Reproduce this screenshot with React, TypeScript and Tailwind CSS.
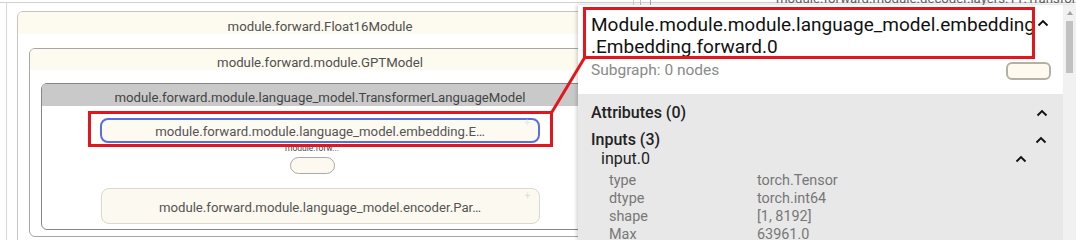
import React from "react";

function Chevron({ className = "" }: { className?: string }) {
  return (
    <svg width="12" height="8" viewBox="0 0 12 8" className={className}>
      <polyline points="1.5,6.5 6,2 10.5,6.5" fill="none" stroke="#111" strokeWidth="1.9" />
    </svg>
  );
}

function Row({ label, value }: { label: string; value: string }) {
  return (
    <div className="flex h-[18px] items-center pl-[18px] text-[14.4px] text-[#777]">
      <span className="w-[148px]">{label}</span>
      <span>{value}</span>
    </div>
  );
}

export default function App() {
  return (
    <div className="relative w-[1076px] h-[240px] overflow-hidden bg-white font-['Roboto',sans-serif]">
      {/* graph canvas */}
      <div className="pt-[2px]">
        <div className="h-px bg-[#d2d2d2]" />
        <div className="ml-[6px] border-l border-[#d8d8d8] pl-[10px] pt-[8px] h-[300px]">
          {/* Float16Module */}
          <div className="w-[606px] rounded-[6px] border border-[#c4c4c4] px-[11px] pb-[10px]">
            <div className="-mx-[11px] h-[22px] rounded-t-[5px] bg-[#fdfaf0] text-center text-[13.2px] leading-[29px] text-[#505050]">
              module.forward.Float16Module
            </div>
            {/* GPTModel */}
            <div className="mt-[14px] w-[582px] rounded-[6px] border border-[#a6a6a6] px-[11px] pb-[6px]">
              <div className="-mx-[11px] h-[21px] rounded-t-[5px] bg-[#fdfaf0] text-center text-[13.2px] leading-[27px] text-[#505050]">
                module.forward.module.GPTModel
              </div>
              {/* TransformerLanguageModel */}
              <div className="mt-[13px] w-[558px] rounded-[6px] border border-[#858585]">
                <div className="h-[22px] rounded-t-[5px] bg-[#c9c9c9] text-center text-[13.2px] leading-[27px] text-[#454545]">
                  module.forward.module.language_model.TransformerLanguageModel
                </div>
                <div className="flex flex-col items-center pt-[12px] pb-[5px]">
                  <div className="relative w-[440px] h-[25px] rounded-[8px] border-2 border-[#5b6fdc] bg-[#fdfaf2] text-center text-[13.2px] leading-[23px] text-[#555]">
                    module.forward.module.language_model.embedding.E…
                    <span className="absolute right-[8px] top-[-2px] text-[10px] leading-[10px] text-[#e6e6f4]">+</span>
                  </div>
                  <div className="mt-[1px] -ml-[16px] text-[8.5px] leading-[9px] text-[#444]">module.forw...</div>
                  <div className="mt-[4px] -ml-[16px] w-[45px] h-[17px] rounded-full border border-[#a9a9a9] bg-[#fdf9f0]" />
                  <div className="relative mt-[14px] w-[439px] h-[36px] rounded-[8px] border border-[#dcd8cc] bg-[#fcf9f0] text-center text-[13.2px] leading-[37px] text-[#555]">
                    module.forward.module.language_model.encoder.Par…
                    <span className="absolute right-[8px] top-[2px] text-[10px] leading-[10px] text-[#e2ded4]">+</span>
                  </div>
                </div>
              </div>
            </div>
          </div>
        </div>
        {/* neighbouring nodes peeking above the panel */}
        <div className="absolute left-[633px] top-0 h-[6px] border-l border-[#cfcfcf]" />
        <div className="absolute left-[640px] top-0 h-[6px] border-l border-[#bdbdbd]" />
        <div className="absolute left-[650px] top-0 h-[6px] border-l border-[#a8a8a8]" />
        <div className="absolute left-[776px] top-[-8px] whitespace-nowrap text-[13.2px] leading-[13px] text-[#606060]">
          module.forward.module.decoder.layers.11.Transformer
        </div>
      </div>

      {/* side panel */}
      <div className="absolute left-[578px] top-[5px] right-0 bottom-0 flex shadow-[-1px_0_4px_rgba(0,0,0,0.22)]">
        <div className="flex flex-1 flex-col overflow-hidden bg-white">
          <div className="h-[89px] shrink-0 pl-[13px] pr-[12px] pt-[9px]">
            <div className="flex items-start justify-between">
              <div className="text-[19px] leading-[22px] text-[#111]">
                <div>Module.module.module.language_model.embedding</div>
                <div>.Embedding.forward.0</div>
              </div>
              <Chevron className="mt-[5px] mr-[2px]" />
            </div>
            <div className="mt-[3px] flex h-[20px] items-center justify-between">
              <span className="text-[15.5px] text-[#8a8a8a]">Subgraph: 0 nodes</span>
              <div className="w-[45px] h-[18px] rounded-[6px] border-2 border-[#b4b0a4] bg-[#fffaf0]" />
            </div>
          </div>
          <div className="flex-1 bg-[#e8e8e8] pl-[13px] pr-[13px] pt-[9px]">
            <div className="flex h-[20px] items-center justify-between">
              <span className="text-[16px] font-medium text-[#222]">Attributes (0)</span>
              <Chevron className="-mt-[1px] mr-[2px]" />
            </div>
            <div className="mt-[7px] flex h-[19px] items-center justify-between">
              <span className="text-[16px] font-medium text-[#222]">Inputs (3)</span>
              <Chevron className="mt-[1px] mr-[3px]" />
            </div>
            <div className="flex h-[19px] items-center justify-between pl-[10px]">
              <span className="text-[16px] text-[#222]">input.0</span>
              <Chevron className="mt-[1px] mr-[23px]" />
            </div>
            <div className="mt-[4px]">
              <Row label="type" value="torch.Tensor" />
              <Row label="dtype" value="torch.int64" />
              <Row label="shape" value="[1, 8192]" />
              <Row label="Max" value="63961.0" />
            </div>
          </div>
        </div>
        {/* scrollbar */}
        <div className="flex w-[13px] flex-col items-center bg-[#f1f1f1]">
          <div className="mt-[6px] h-0 w-0 border-x-[3px] border-b-[4px] border-x-transparent border-b-[#a3a3a3]" />
          <div className="mt-[6px] w-[7px] h-[52px] bg-[#c1c1c1]" />
        </div>
      </div>

      {/* red annotations */}
      <div className="absolute left-[88px] top-[111px] w-[465px] h-[36px] border-[3px] border-[#e3161e]" />
      <div className="absolute left-[583px] top-[7px] w-[452px] h-[52px] border-[3px] border-[#e3161e]" />
      <svg className="pointer-events-none absolute left-0 top-0" width="1076" height="240">
        <line x1="552" y1="112" x2="585" y2="57" stroke="#e3161e" strokeWidth="3" />
      </svg>
    </div>
  );
}
